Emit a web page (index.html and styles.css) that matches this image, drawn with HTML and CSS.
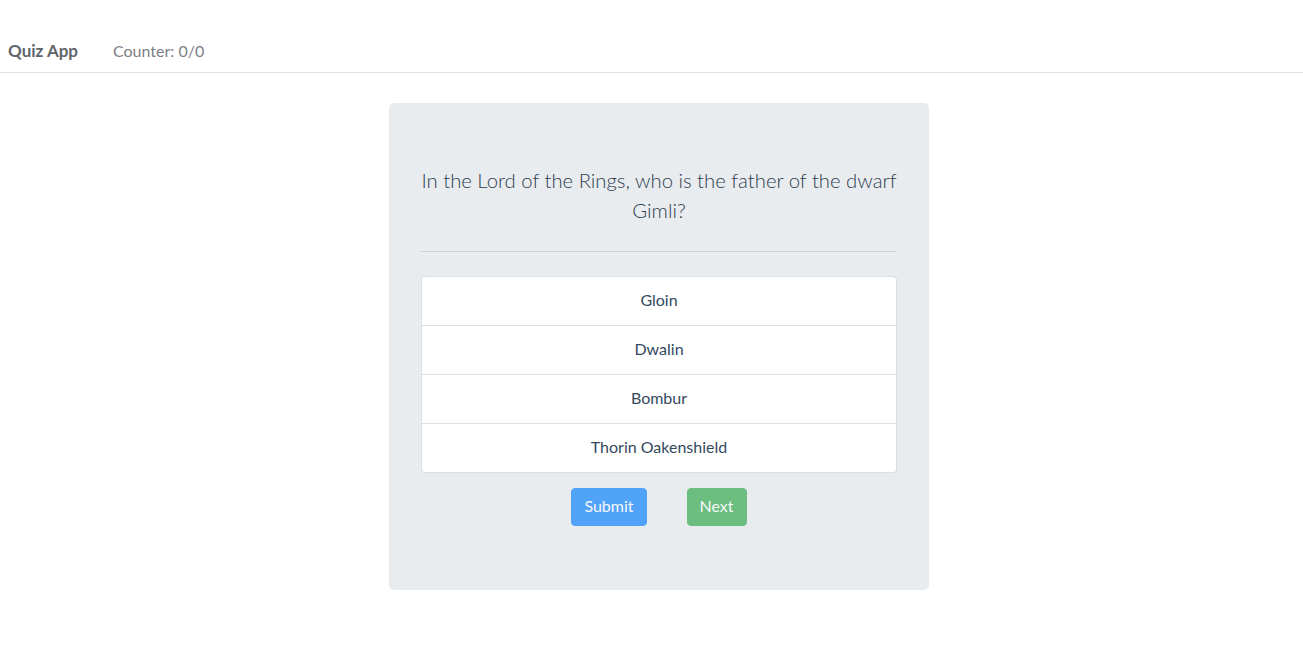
FILE: index.html
```html
<!DOCTYPE html>
<html lang="en">
<head>
<meta charset="utf-8">
<title>Quiz App</title>
<link rel="stylesheet" href="styles.css">
</head>
<body>
<nav class="navbar">
  <span class="brand">Quiz App</span>
  <span class="counter">Counter: 0/0</span>
</nav>
<main class="page">
  <section class="jumbotron">
    <p class="question">In the Lord of the Rings, who is the father of the dwarf Gimli?</p>
    <hr class="divider">
    <ul class="answers">
      <li class="answer">Gloin</li>
      <li class="answer">Dwalin</li>
      <li class="answer">Bombur</li>
      <li class="answer">Thorin Oakenshield</li>
    </ul>
    <div class="actions">
      <button class="btn btn-primary" disabled>Submit</button>
      <button class="btn btn-success" disabled>Next</button>
    </div>
  </section>
</main>
</body>
</html>
```
FILE: styles.css
```css
* { box-sizing: border-box; }
body {
  margin: 0;
  font-family: Lato, "Noto Sans", sans-serif;
  color: #2c3e50;
  background: #fff;
}
.navbar {
  margin-top: 32px;
  height: 41px;
  padding: 0 8px 4px;
  display: flex;
  align-items: center;
  gap: 35px;
  border-bottom: 1px solid #dee2e6;
  font-size: 16px;
}
.brand {
  font-size: 17px;
  font-weight: 700;
  color: #5f656b;
}
.counter {
  color: #7b8086;
}
.page {
  display: flex;
  justify-content: center;
  padding: 30px 0 0 15px;
}
.jumbotron {
  width: 540px;
  background: #e9ecef;
  border-radius: 4.8px;
  padding: 64px 32px;
  text-align: center;
}
.question {
  margin: -2px 0 0;
  padding-bottom: 2px;
  font-size: 20.3px;
  line-height: 30px;
  font-weight: 300;
  color: #2c3e50;
}
.divider {
  margin: 24px 0;
  border: 0;
  border-top: 1px solid rgba(0,0,0,.1);
}
.answers {
  list-style: none;
  margin: 0;
  padding: 0;
  background: #fff;
  border: 1px solid rgba(0,0,0,.125);
  border-radius: 4px;
}
.answer {
  padding: 11px 20px 13px;
  line-height: 24px;
  font-size: 16px;
  color: #34495e;
}
.answer + .answer {
  border-top: 1px solid rgba(0,0,0,.125);
}
.actions {
  margin-top: 15px;
  display: flex;
  justify-content: center;
  gap: 40px;
}
.btn {
  font-family: inherit;
  font-size: 16px;
  line-height: 24px;
  padding: 5px 12px 7px;
  border: 1px solid transparent;
  border-radius: 4px;
  color: #fff;
  opacity: .65;
}
.btn-primary { background: #007bff; border-color: #007bff; }
.btn-success { background: #28a745; border-color: #28a745; }
```
